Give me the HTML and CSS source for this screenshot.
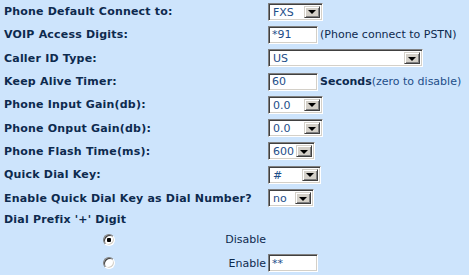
FILE: index.html
```html
<!DOCTYPE html>
<html>
<head>
<title>Phone Settings</title>
<link rel="stylesheet" href="styles.css">
</head>
<body>
<form class="settings">
	<div class="row">
		<label class="lbl">Phone Default Connect to:</label>
		<div class="ctl">
			<span class="sel w55"><select><option>FXS</option><option>FXO</option></select><span class="btn"></span></span>
		</div>
	</div>
	<div class="row">
		<label class="lbl">VOIP Access Digits:</label>
		<div class="ctl">
			<input type="text" class="txt" value="*91"><span class="note">(Phone connect to PSTN)</span>
		</div>
	</div>
	<div class="row">
		<label class="lbl">Caller ID Type:</label>
		<div class="ctl">
			<span class="sel w155"><select><option>US</option></select><span class="btn"></span></span>
		</div>
	</div>
	<div class="row">
		<label class="lbl">Keep Alive Timer:</label>
		<div class="ctl">
			<input type="text" class="txt" value="60"><b class="unit">Seconds</b><span class="hint">(zero to disable)</span>
		</div>
	</div>
	<div class="row">
		<label class="lbl">Phone Input Gain(db):</label>
		<div class="ctl">
			<span class="sel w55"><select><option>0.0</option></select><span class="btn"></span></span>
		</div>
	</div>
	<div class="row">
		<label class="lbl">Phone Onput Gain(db):</label>
		<div class="ctl">
			<span class="sel w55"><select><option>0.0</option></select><span class="btn"></span></span>
		</div>
	</div>
	<div class="row">
		<label class="lbl">Phone Flash Time(ms):</label>
		<div class="ctl">
			<span class="sel w46"><select><option>600</option></select><span class="btn"></span></span>
		</div>
	</div>
	<div class="row">
		<label class="lbl">Quick Dial Key:</label>
		<div class="ctl">
			<span class="sel w52"><select><option>#</option></select><span class="btn"></span></span>
		</div>
	</div>
	<div class="row">
		<label class="lbl">Enable Quick Dial Key as Dial Number?</label>
		<div class="ctl">
			<span class="sel w45"><select><option>no</option><option>yes</option></select><span class="btn"></span></span>
		</div>
	</div>
	<div class="row head">
		<label class="lbl">Dial Prefix '+' Digit</label>
		<div class="ctl"></div>
	</div>
	<div class="row first">
		<div class="lbl opt">
			<span class="radiocell"><input type="radio" name="plus" class="radio" checked></span>
			<span class="optname">Disable</span>
		</div>
		<div class="ctl"></div>
	</div>
	<div class="row last">
		<div class="lbl opt">
			<span class="radiocell"><input type="radio" name="plus" class="radio"></span>
			<span class="optname">Enable</span>
		</div>
		<div class="ctl">
			<input type="text" class="txt" value="**">
		</div>
	</div>
</form>
</body>
</html>
```
FILE: styles.css
```css
body {
	margin: 0;
	background-color: #cde4fc;
	font-family: Verdana, "DejaVu Sans", sans-serif;
	font-size: 11px;
	color: #0d2a4e;
}
.settings {
	display: flex;
	flex-direction: column;
	padding: 0 0 0 4px;
}
.row {
	display: grid;
	grid-template-columns: 264px auto;
	align-items: center;
	height: 23.3px;
}
.row.head {
	height: 19px;
}
.row.first {
	height: 22px;
}
.row.last {
	height: 25px;
}
.lbl {
	font-weight: bold;
	letter-spacing: 0.2px;
	white-space: nowrap;
}
.ctl {
	display: flex;
	align-items: center;
	white-space: nowrap;
}
.opt {
	display: flex;
	align-items: center;
	font-weight: normal;
	letter-spacing: 0;
}
.radiocell {
	width: 210px;
	display: flex;
	justify-content: center;
}
.optname {
	flex: 1;
	text-align: right;
	padding-right: 2px;
}

/* classic sunken boxes */
.txt, .sel {
	box-sizing: border-box;
	height: 18px;
	border: 1px solid;
	border-color: #808080 #ffffff #ffffff #808080;
	box-shadow: inset 1px 1px #404040, inset -1px -1px #d4d0c8;
	background: #ffffff;
}
.txt {
	width: 50px;
	padding: 0 3px;
	font-family: inherit;
	font-size: 11px;
	color: #1d4e89;
	outline: none;
}
.sel {
	display: inline-flex;
	padding: 2px;
}
.sel select {
	appearance: none;
	-webkit-appearance: none;
	flex: 1;
	min-width: 0;
	border: 0;
	margin: 0;
	padding: 0 0 0 2px;
	background: #ffffff;
	font-family: inherit;
	font-size: 11px;
	color: #1d4e89;
	outline: none;
}
.btn {
	width: 16px;
	box-sizing: border-box;
	background: #d4d0c8;
	border: 1px solid;
	border-color: #d4d0c8 #404040 #404040 #d4d0c8;
	box-shadow: inset 1px 1px #ffffff, inset -1px -1px #808080;
	display: flex;
	align-items: center;
	justify-content: center;
}
.btn::after {
	content: "";
	border-left: 4px solid transparent;
	border-right: 4px solid transparent;
	border-top: 4px solid #000000;
	margin-top: 1px;
}
.w55 { width: 55px; }
.w155 { width: 155px; }
.w46 { width: 47px; }
.w52 { width: 53px; }
.w45 { width: 46px; }

.note {
	margin-left: 2px;
}
.unit {
	margin-left: 2px;
}
.hint {
	color: #1d4e89;
}

.radio {
	appearance: none;
	-webkit-appearance: none;
	width: 12px;
	height: 12px;
	margin: 0;
	border-radius: 50%;
	border: 1px solid;
	border-color: #808080 #ffffff #ffffff #808080;
	box-shadow: inset 1px 1px #404040, inset -1px -1px #d4d0c8;
	background: #ffffff;
}
.radio:checked {
	background: radial-gradient(circle, #000000 0 2px, #ffffff 2.5px);
}
```
